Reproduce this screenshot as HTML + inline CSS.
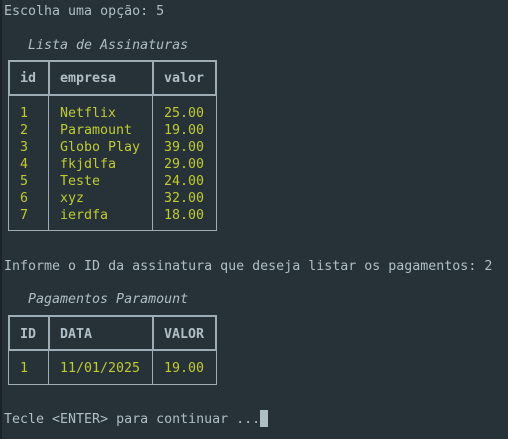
<!DOCTYPE html><html><head><style>
body{margin:0;width:508px;height:439px;background:#263238;overflow:hidden;position:relative;font-family:"DejaVu Sans Mono","Liberation Mono",monospace;font-size:13.3px;color:#b0bec5}
.t{position:absolute;line-height:17px;white-space:pre;margin-top:1px}
.g{color:#c0ca33}
.b{font-weight:bold}
.i{font-style:italic}
.l{position:absolute;background:#9eadb5}
</style></head><body>
<div style="position:absolute;left:0;top:0;width:2px;height:439px;background:#1c2328"></div>
<div class="t" style="left:4px;top:2px">Escolha uma opção: 5</div>
<div class="t i" style="left:28px;top:36px">Lista de Assinaturas</div>
<div class="l" style="left:8px;top:60px;width:209px;height:2px"></div>
<div class="l" style="left:8px;top:94px;width:209px;height:2px"></div>
<div class="l" style="left:8px;top:230px;width:209px;height:1px"></div>
<div class="l" style="left:8px;top:60px;width:2px;height:36px"></div>
<div class="l" style="left:48px;top:60px;width:2px;height:36px"></div>
<div class="l" style="left:152px;top:60px;width:2px;height:36px"></div>
<div class="l" style="left:215px;top:60px;width:2px;height:36px"></div>
<div class="l" style="left:8px;top:96px;width:1px;height:135px"></div>
<div class="l" style="left:48px;top:96px;width:1px;height:135px"></div>
<div class="l" style="left:152px;top:96px;width:1px;height:135px"></div>
<div class="l" style="left:216px;top:96px;width:1px;height:135px"></div>
<div class="t b" style="left:20px;top:69px">id</div>
<div class="t b" style="left:60px;top:69px">empresa</div>
<div class="t b" style="left:164px;top:69px">valor</div>
<div class="t g" style="left:20px;top:104px">1
2
3
4
5
6
7</div>
<div class="t g" style="left:60px;top:104px">Netflix
Paramount
Globo Play
fkjdlfa
Teste
xyz
ierdfa</div>
<div class="t g" style="left:164px;top:104px">25.00
19.00
39.00
29.00
24.00
32.00
18.00</div>
<div class="t" style="left:4px;top:257px">Informe o ID da assinatura que deseja listar os pagamentos: 2</div>
<div class="t i" style="left:28px;top:290px">Pagamentos Paramount</div>
<div class="l" style="left:8px;top:315px;width:209px;height:2px"></div>
<div class="l" style="left:8px;top:349px;width:209px;height:2px"></div>
<div class="l" style="left:8px;top:384px;width:209px;height:1px"></div>
<div class="l" style="left:8px;top:315px;width:2px;height:36px"></div>
<div class="l" style="left:48px;top:315px;width:2px;height:36px"></div>
<div class="l" style="left:152px;top:315px;width:2px;height:36px"></div>
<div class="l" style="left:215px;top:315px;width:2px;height:36px"></div>
<div class="l" style="left:8px;top:351px;width:1px;height:34px"></div>
<div class="l" style="left:48px;top:351px;width:1px;height:34px"></div>
<div class="l" style="left:152px;top:351px;width:1px;height:34px"></div>
<div class="l" style="left:216px;top:351px;width:1px;height:34px"></div>
<div class="t b" style="left:20px;top:325px">ID</div>
<div class="t b" style="left:60px;top:325px">DATA</div>
<div class="t b" style="left:164px;top:325px">VALOR</div>
<div class="t g" style="left:20px;top:359px">1</div>
<div class="t g" style="left:60px;top:359px">11/01/2025</div>
<div class="t g" style="left:164px;top:359px">19.00</div>
<div class="t" style="left:4px;top:410px">Tecle &lt;ENTER&gt; para continuar ...</div>
<div style="position:absolute;left:260px;top:410px;width:8px;height:17px;background:#b0bec5"></div>
</body></html>
